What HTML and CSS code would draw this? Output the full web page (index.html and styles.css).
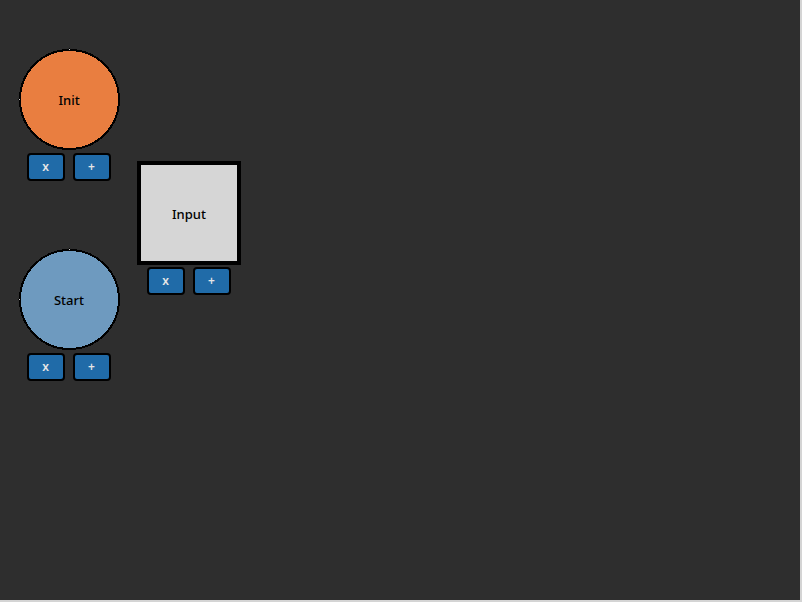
FILE: index.html
```html
<!DOCTYPE html>
<html lang="en">
<head>
<meta charset="utf-8">
<title>Node editor</title>
<link rel="stylesheet" href="styles.css">
</head>
<body>
<main class="canvas">
  <section class="node node-init">
    <div class="shape">
      <svg class="disc" viewBox="0 0 102 102" aria-hidden="true"><circle cx="51.5" cy="51.5" r="49.5"/><path class="notch" d="M51 0h1v1h-1zM0 51h1v1h-1z"/><path class="glint" d="M51 1h1v1h-1zM1 51h1v1h-1z"/></svg>
      <span class="label">Init</span>
    </div>
    <div class="actions"><button type="button">x</button><button type="button">+</button></div>
  </section>
  <section class="node node-start">
    <div class="shape">
      <svg class="disc" viewBox="0 0 102 102" aria-hidden="true"><circle cx="51.5" cy="51.5" r="49.5"/><path class="notch" d="M51 0h1v1h-1zM0 51h1v1h-1z"/><path class="glint" d="M51 1h1v1h-1zM1 51h1v1h-1z"/></svg>
      <span class="label">Start</span>
    </div>
    <div class="actions"><button type="button">x</button><button type="button">+</button></div>
  </section>
  <section class="node node-input">
    <div class="shape square"><span class="label">Input</span></div>
    <div class="actions"><button type="button">x</button><button type="button">+</button></div>
  </section>
</main>
</body>
</html>
```
FILE: styles.css
```css
* { box-sizing: border-box; }

body {
  margin: 0;
  font: 500 13px/18px "Noto Sans", sans-serif;
}

.canvas {
  position: relative;
  min-height: 100vh;
  background: #2e2e2e;
  border: solid #d4d4d4;
  border-width: 0 2px 2px 0;
}

.node {
  position: absolute;
  display: flex;
  flex-direction: column;
  align-items: center;
  gap: 2px;
}

.node-init { left: 18px; top: 48px; }
.node-start { left: 18px; top: 248px; }
.node-input { left: 137px; top: 161px; }

.shape {
  display: grid;
  place-items: center;
  width: 102px;
  height: 103px;
  color: #000;
}

.shape > * { grid-area: 1 / 1; }

.disc {
  width: 102px;
  height: 102px;
  align-self: start;
  stroke: #000;
  stroke-width: 2;
  shape-rendering: crispEdges;
}

.notch { fill: #000; stroke: none; }
.glint { fill: #d6d6d6; stroke: none; }

.node-init circle { fill: #e97e40; }
.node-start circle { fill: #6e9abf; }

.square {
  width: 104px;
  height: 104px;
  padding-top: 2px;
  background: #d6d6d6;
  border: 4px solid #000;
}

.actions {
  display: flex;
  gap: 8px;
}

.actions button {
  width: 38px;
  height: 28px;
  padding: 0 1px 0 0;
  border: 2px solid #000;
  border-radius: 4px;
  background: #206ba8;
  color: #e6e6e6;
  font: 600 12px/16px "Noto Sans", sans-serif;
}
```
